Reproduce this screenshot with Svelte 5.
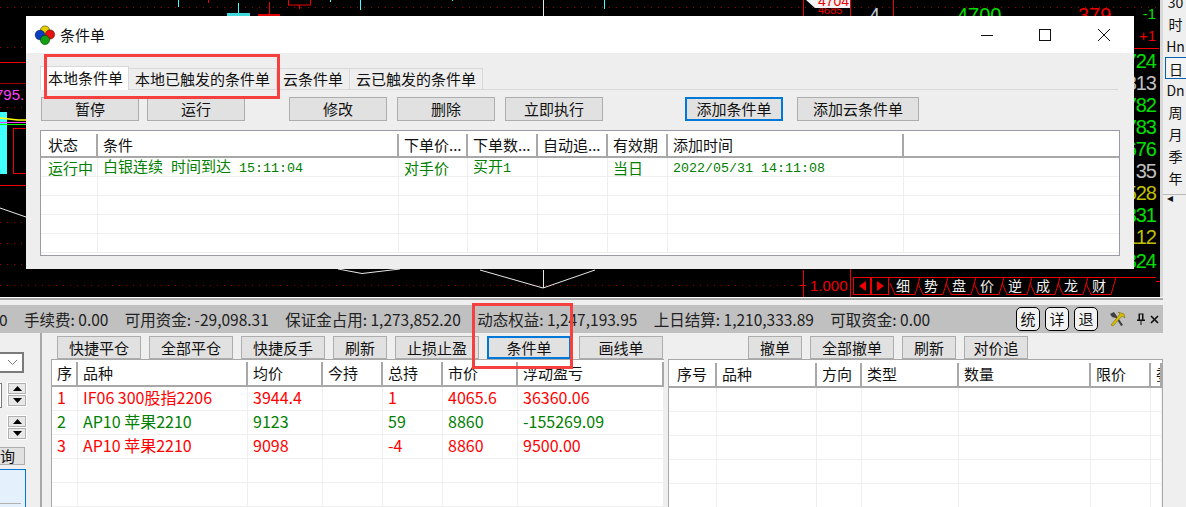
<script>
  const periods = ["30", "时", "Hn", "日", "Dn", "周", "月", "季", "年"];

  const sideNums = [
    { t: "724", y: 68, c: "#00e000" },
    { t: "313", y: 90, c: "#c0c0c0" },
    { t: "782", y: 112, c: "#00e000" },
    { t: "783", y: 134, c: "#00e000" },
    { t: "676", y: 156, c: "#00e000" },
    { t: "35", y: 178, c: "#c0c0c0" },
    { t: "528", y: 200, c: "#c0c000" },
    { t: "331", y: 222, c: "#00e000" },
    { t: "112", y: 244, c: "#c0c000" },
    { t: "324", y: 268, c: "#00e000" },
  ];
  const chartTabs = ["细", "势", "盘", "价", "逆", "成", "龙", "财"];

  const infoItems = [
    "手续费: 0.00",
    "可用资金: -29,098.31",
    "保证金占用: 1,273,852.20",
    "动态权益: 1,247,193.95",
    "上日结算: 1,210,333.89",
    "可取资金: 0.00",
  ];

  const dialogCols = [57, 301, 69, 70, 70, 60, 236, 215];
  const dialogHead = ["状态", "条件", "下单价...", "下单数...", "自动追...", "有效期", "添加时间", ""];

  const posCols = [26, 170, 75, 60, 60, 75, 146];
  const posHead = ["序", "品种", "均价", "今持", "总持", "市价", "浮动盈亏"];
  const posRows = [
    { c: "red", v: ["1", "IF06 300股指2206", "3944.4", "", "1", "4065.6", "36360.06"] },
    { c: "green", v: ["2", "AP10 苹果2210", "9123", "", "59", "8860", "-155269.09"] },
    { c: "red", v: ["3", "AP10 苹果2210", "9098", "", "-4", "8860", "9500.00"] },
    { c: "", v: ["", "", "", "", "", "", ""] },
    { c: "", v: ["", "", "", "", "", "", ""] },
  ];

  const orderCols = [48, 100, 45, 97, 132, 60, 11];
  const orderHead = ["序号", "品种", "方向", "类型", "数量", "限价", "委"];
</script>

{#snippet spinner()}
  <div class="spin">
    <span><svg width="9" height="5" viewBox="0 0 9 5"><path d="M4.5 0 L9 5 H0 Z" /></svg></span>
    <span><svg width="9" height="5" viewBox="0 0 9 5"><path d="M0 0 H9 L4.5 5 Z" /></svg></span>
  </div>
{/snippet}

<div class="page">
  <div class="top">
    <div class="chart">
      <svg width="1160" height="297" viewBox="0 0 1160 297">
        <!-- dotted price grid -->
        <g stroke="#a00000" stroke-dasharray="1 6" fill="none">
          <line x1="0" y1="7.5" x2="1160" y2="7.5" />
          <line x1="0" y1="47.5" x2="26" y2="47.5" />
          <line x1="0" y1="107.5" x2="26" y2="107.5" />
          <line x1="0" y1="222.5" x2="26" y2="222.5" />
          <line x1="0" y1="243.5" x2="26" y2="243.5" />
          <line x1="0" y1="264.5" x2="26" y2="264.5" />
          <line x1="0" y1="285.5" x2="800" y2="285.5" />
        </g>
        <!-- candles peeking out above the dialog -->
        <g fill="none" stroke="#40ffff">
          <line x1="178.5" y1="0" x2="178.5" y2="7" />
          <line x1="238.5" y1="3" x2="238.5" y2="14" />
          <line x1="330.5" y1="0" x2="330.5" y2="2" />
          <line x1="360.5" y1="0" x2="360.5" y2="10" />
          <line x1="452.5" y1="0" x2="452.5" y2="1" />
          <line x1="604.5" y1="0" x2="604.5" y2="9" />
        </g>
        <rect x="227" y="13" width="23" height="3" fill="#40d8d8" />
        <g fill="none" stroke="#f00000">
          <line x1="208.5" y1="0" x2="208.5" y2="3" />
          <line x1="269.5" y1="2" x2="269.5" y2="14" />
          <rect x="288.5" y="-2" width="22" height="7" />
          <line x1="299.5" y1="5" x2="299.5" y2="9" />
          <line x1="0" y1="62.5" x2="26" y2="62.5" />
          <line x1="0" y1="185.5" x2="26" y2="185.5" />
          <line x1="803.5" y1="0" x2="803.5" y2="16" />
          <line x1="850.5" y1="0" x2="850.5" y2="297" />
          <line x1="893.5" y1="0" x2="893.5" y2="16" />
          <line x1="1134" y1="48.5" x2="1159" y2="48.5" />
          <rect x="13.5" y="128.5" width="20" height="45" />
          <line x1="803.5" y1="270" x2="803.5" y2="297" />
          <line x1="800" y1="285.5" x2="806" y2="285.5" />
          <line x1="1156" y1="281.5" x2="1160" y2="281.5" />
        </g>
        <rect x="258" y="14" width="22" height="2" fill="#e00000" />
        <line x1="0" y1="83.5" x2="26" y2="83.5" stroke="#a00000" />
        <rect x="0" y="112" width="7" height="62" fill="#40ffff" />
        <polyline points="0,118 9,119 18,120 26,120" fill="none" stroke="#ffff00" stroke-width="1.5" />
        <line x1="0" y1="122.5" x2="26" y2="122.5" stroke="#ff40ff" />
        <line x1="0" y1="124.5" x2="26" y2="124.5" stroke="#00ff00" />
        <!-- white price line -->
        <g fill="none" stroke="#e8e8e8">
          <polyline points="0,208 26,217" />
          <polyline points="338,269 362,273.5 400,269" />
          <polyline points="480,270 543,288 595,270" />
          <line x1="543.5" y1="270" x2="543.5" y2="288" />
          <line x1="543.5" y1="0" x2="543.5" y2="16" />
        </g>

        <text class="mid-num" x="-5" y="100" fill="#ff40ff">795.</text>
        <text class="big" x="957" y="22" fill="#00e000">4700</text>
        <text class="big" x="1078" y="22" fill="#f00000">379</text>
        <text class="big" x="869" y="22" fill="#c0c8d8">4</text>
        <text class="mid-num right" x="1156" y="19" fill="#00e000">-1</text>
        <text class="mid-num right" x="1156" y="41" fill="#f00000">+1</text>
        {#each sideNums as n}
          <text class="big right tight" x="1156" y={n.y} fill={n.c}>{n.t}</text>
        {/each}

        <text class="small" x="818" y="14" fill="#f00000">4685</text>
        <polygon points="806,0 850,0 850,8 815,8" fill="#f4f4f4" />
        <text class="tag" x="818" y="6" fill="#f00000">4704</text>

        <text class="mid-num" x="810" y="291" fill="#f00000">1.000</text>

        <!-- chart tab strip -->
        <g fill="none" stroke="#f00000">
          <line x1="853" y1="277.5" x2="1156" y2="277.5" />
          <rect x="853.5" y="277.5" width="17" height="17" />
          <rect x="871.5" y="277.5" width="17" height="17" />
          {#each chartTabs as _, i}
            <polyline points="{890 + 28 * i},283 {895 + 28 * i},294.5 {915 + 28 * i},294.5 {920 + 28 * i},277.5" />
          {/each}
        </g>
        <polygon points="866,281 866,291 859,286" fill="#f00000" />
        <polygon points="877,281 877,291 884,286" fill="#f00000" />
        {#each chartTabs as t, i}
          <text class="tab" x={903 + 28 * i} y="291" fill="#f0f0f0">{t}</text>
        {/each}
      </svg>
    </div>

    <div class="side">
      {#each periods as p}
        <div class="period" class:current={p === "日"}>{p}</div>
      {/each}
      <div class="period arrow">◂</div>
    </div>
  </div>

  <div class="band"></div>

  <div class="info">
    <div class="info-text">
      <span>0</span>
      {#each infoItems as item}
        <span>{item}</span>
      {/each}
    </div>
    <div class="info-btns">
      <button class="round">统</button>
      <button class="round">详</button>
      <button class="round">退</button>
      <svg class="tools" width="18" height="16" viewBox="0 0 18 16">
        <path d="M2 3 L6 1 L15 14 L13 15 L8 7 L4 6 Z" fill="#404040" />
        <path d="M3 14 L12 3 L10 1 L16 3 L17 7 L14 5 L5 15 Z" fill="#d8c000" stroke="#6a5a00" stroke-width="0.5" />
      </svg>
      <svg class="pin" width="8" height="12" viewBox="0 0 8 12">
        <path d="M1.5 .5 H6.5 V6.5 H8 V8 H4.5 V12 H3.5 V8 H0 V6.5 H1.5 Z M3 1.5 V6.5 H5 V1.5 Z" fill="#111" fill-rule="evenodd" />
      </svg>
      <svg class="close" width="9" height="9" viewBox="0 0 9 9">
        <path d="M1 1 L8 8 M8 1 L1 8" stroke="#111" stroke-width="1.7" />
      </svg>
    </div>
  </div>

  <div class="bottom">
    <div class="strip">
      <div class="select">
        <svg width="11" height="7" viewBox="0 0 11 7"><path d="M1 1 L5.5 5.5 L10 1" fill="none" stroke="#777" /></svg>
      </div>
      <div class="spin-row">
        <div class="stub"></div>
        {@render spinner()}
      </div>
      <div class="spin-row second">
        {@render spinner()}
      </div>
      <div class="query">询</div>
      <div class="blue-box"><div class="blue-line"></div></div>
    </div>

    <div class="pane left">
      <div class="bar">
        <button>快捷平仓</button>
        <button>全部平仓</button>
        <button>快捷反手</button>
        <button class="short">刷新</button>
        <button>止损止盈</button>
        <button class="default">条件单</button>
        <button>画线单</button>
      </div>
      <div class="grid-wrap">
        <table>
          <colgroup>
            {#each posCols as w}<col style="width:{w}px" />{/each}
          </colgroup>
          <thead>
            <tr>{#each posHead as h}<th>{h}</th>{/each}</tr>
          </thead>
          <tbody>
            {#each posRows as r}
              <tr class={r.c}>{#each r.v as v}<td>{v}</td>{/each}</tr>
            {/each}
          </tbody>
        </table>
      </div>
    </div>

    <div class="pane right">
      <div class="bar">
        <button class="short">撤单</button>
        <button>全部撤单</button>
        <button class="short">刷新</button>
        <button class="mid">对价追</button>
      </div>
      <div class="grid-wrap orders">
        <table>
          <colgroup>
            {#each orderCols as w}<col style="width:{w}px" />{/each}
          </colgroup>
          <thead>
            <tr>{#each orderHead as h}<th>{h}</th>{/each}</tr>
          </thead>
          <tbody>
            {#each [0, 1, 2, 3, 4] as _}
              <tr>{#each orderCols as __}<td></td>{/each}</tr>
            {/each}
          </tbody>
        </table>
      </div>
    </div>
  </div>

  <!-- dialog floats over the chart -->
  <div class="dialog">
    <div class="title">
      <svg width="22" height="22" viewBox="0 0 22 22">
        <circle cx="11" cy="6.5" r="4.6" fill="#e8d000" stroke="#3a3000" stroke-width=".6" />
        <circle cx="6" cy="11" r="4.8" fill="#0a3cc0" stroke="#001a60" stroke-width=".6" />
        <circle cx="16" cy="10.5" r="4.6" fill="#e81010" stroke="#500000" stroke-width=".6" />
        <circle cx="11" cy="16" r="4.6" fill="#10a010" stroke="#004000" stroke-width=".6" />
      </svg>
      <span class="title-text">条件单</span>
      <div class="win">
        <svg width="14" height="14" viewBox="0 0 14 14"><line x1="1" y1="7.5" x2="13" y2="7.5" stroke="#111" /></svg>
        <svg width="14" height="14" viewBox="0 0 14 14"><rect x="1.5" y="1.5" width="11" height="11" fill="none" stroke="#111" /></svg>
        <svg width="14" height="14" viewBox="0 0 14 14"><path d="M1 1 L13 13 M13 1 L1 13" stroke="#111" fill="none" /></svg>
      </div>
    </div>
    <div class="dlg-body">
      <div class="tabs">
        <div class="tabitem active">本地条件单</div>
        <div class="tabitem">本地已触发的条件单</div>
        <div class="tabitem">云条件单</div>
        <div class="tabitem">云已触发的条件单</div>
      </div>
      <div class="dlg-bar">
        <button class="wide">暂停</button>
        <button class="wide">运行</button>
        <button class="wide gap-a">修改</button>
        <button class="wide">删除</button>
        <button class="wide">立即执行</button>
        <button class="wide default gap-b">添加条件单</button>
        <button class="wider">添加云条件单</button>
      </div>
      <div class="dlg-grid">
        <table>
          <colgroup>
            {#each dialogCols as w}<col style="width:{w}px" />{/each}
          </colgroup>
          <thead>
            <tr>
              {#each dialogHead as h, i}
                <th class:nosep={i === dialogHead.length - 1}>{h}</th>
              {/each}
            </tr>
          </thead>
          <tbody>
            <tr class="green">
              <td>运行中</td>
              <td>白银连续<span class="mono-cell">&nbsp;</span>时间到达<span class="mono-cell">&nbsp;15:11:04</span></td>
              <td>对手价</td>
              <td>买开<span class="mono-cell">1</span></td>
              <td></td>
              <td>当日</td>
              <td><span class="mono-cell">2022/05/31 14:11:08</span></td>
              <td class="nosep"></td>
            </tr>
            {#each [0, 1, 2, 3] as _}
              <tr>
                {#each dialogCols as __, i}
                  <td class:nosep={i === dialogCols.length - 1}></td>
                {/each}
              </tr>
            {/each}
          </tbody>
        </table>
      </div>
    </div>
  </div>

  <!-- red annotation boxes from the screenshot -->
  <div class="mark mark-tabs"></div>
  <div class="mark mark-btn"></div>
</div>

<style>
  :global(body) {
    margin: 0;
    overflow: hidden;
  }

  .page {
    position: relative;
    width: 1186px;
    height: 507px;
    overflow: hidden;
    background: #efefef;
    color: #111;
    font-family: "Noto Sans CJK SC", "Noto Sans", sans-serif;
    font-size: 15px;
  }

  .top {
    display: flex;
    height: 297px;
  }

  .chart {
    width: 1160px;
    height: 297px;
    background: #000;
    border-right: 3px solid #d8d8d8;
    flex-shrink: 0;
  }

  .chart svg {
    display: block;
  }

  .big {
    font-family: "Liberation Sans", sans-serif;
    font-size: 20px;
  }
  .tight {
    letter-spacing: -1px;
  }
  .mid-num {
    font-family: "Liberation Sans", sans-serif;
    font-size: 15px;
  }
  .right {
    text-anchor: end;
  }
  .small {
    font-family: "Liberation Sans", sans-serif;
    font-size: 11px;
  }
  .tag {
    font-family: "Liberation Sans", sans-serif;
    font-size: 14px;
  }
  .tab {
    font-size: 14px;
    text-anchor: middle;
  }

  .side {
    flex: 1;
    height: 203px;
    margin-top: -9px;
    border-bottom: 1px solid #b8b8b8;
    display: flex;
    flex-direction: column;
    align-items: flex-end;
    font-size: 14px;
    color: #111;
  }

  .period {
    width: 21px;
    height: 22px;
    line-height: 22px;
    text-align: center;
    flex-shrink: 0;
    box-sizing: border-box;
  }
  .period.current {
    border: 1px solid #0060b0;
    border-right: 0;
    background: #f4f4f4;
  }
  .arrow {
    height: 16px;
    line-height: 16px;
    font-size: 12px;
    text-align: left;
    padding-left: 2px;
  }

  .band {
    height: 8px;
    box-sizing: border-box;
    width: 1163px;
    border-top: 1px solid #fff;
    box-shadow: inset 0 2px 0 #a8a8a8;
    background: #efefef;
  }

  .info {
    width: 1163px;
    height: 28px;
    background: #c0c0c0;
    display: flex;
    align-items: center;
    justify-content: space-between;
    overflow: hidden;
  }

  .info-text {
    display: flex;
    gap: 16.4px;
    margin-left: -1px;
    white-space: nowrap;
    font-size: 15.5px;
    color: #222;
  }

  .info-btns {
    display: flex;
    align-items: center;
    flex-shrink: 0;
    padding-right: 4px;
  }

  .round {
    width: 24px;
    height: 24px;
    margin-right: 5px;
    padding: 0;
    border: 1px solid #000;
    border-radius: 5px;
    background: #f2f2f2;
    font: inherit;
    font-size: 15px;
    line-height: 20px;
    color: #111;
  }

  .tools {
    margin-left: 5px;
  }
  .pin {
    margin-left: 11px;
  }
  .close {
    margin-left: 5px;
  }

  .bottom {
    display: flex;
    height: 174px;
  }

  .strip {
    width: 40px;
    height: 174px;
    border-right: 2px solid #a8a8a8;
    flex-shrink: 0;
    display: flex;
    flex-direction: column;
    overflow: hidden;
  }
  .strip > div {
    flex-shrink: 0;
  }

  .select {
    width: 18px;
    height: 17px;
    margin-top: 19px;
    padding-right: 4px;
    border: 2px solid #7a7a7a;
    border-left: 0;
    background: #fff;
    display: flex;
    align-items: center;
    justify-content: flex-end;
  }

  .spin-row {
    display: flex;
    height: 25px;
    margin-top: 9px;
  }
  .spin-row.second {
    margin-top: 8px;
  }
  .stub {
    width: 1px;
    height: 23px;
    margin-top: 1px;
    border: 1px solid #7a7a7a;
    border-left: 0;
    background: #fff;
  }
  .spin {
    margin-left: 5px;
    width: 20px;
    height: 25px;
    display: flex;
    flex-direction: column;
    gap: 1px;
    background: #fff;
    padding: 1px;
    box-sizing: border-box;
  }
  .second .spin {
    margin-left: 7px;
  }
  .spin span {
    flex: 1;
    background: #e8e8e8;
    border: 1px solid #b0b0b0;
    display: flex;
    align-items: center;
    justify-content: center;
  }

  .query {
    width: 25px;
    height: 18px;
    margin-top: 7px;
    background: #e1e1e1;
    border: 1px solid #adadad;
    border-left: 0;
    box-sizing: border-box;
    font-size: 15px;
    line-height: 16px;
    text-align: right;
    padding-right: 11px;
  }

  .blue-box {
    width: 26px;
    height: 40px;
    margin-top: 4px;
    box-sizing: border-box;
    border: 1px solid #0078d7;
    border-left: 0;
    background: #e4f0fb;
    padding-top: 33px;
  }
  .blue-line {
    height: 1px;
    width: 21px;
    background: #b0b0b0;
  }

  .pane {
    display: flex;
    flex-direction: column;
    flex-shrink: 0;
  }
  .pane.left {
    width: 613px;
    margin-left: 9px;
  }
  .pane.right {
    width: 495px;
    margin-left: 4px;
  }

  .bar {
    display: flex;
    gap: 8px;
    height: 23px;
    margin-top: 3px;
    padding-left: 6px;
  }
  .pane.right .bar {
    padding-left: 80px;
  }

  button {
    box-sizing: border-box;
    width: 84px;
    height: 23px;
    padding: 0;
    background: #e1e1e1;
    border: 1px solid #adadad;
    font: inherit;
    font-size: 15px;
    line-height: 19px;
    color: #111;
    white-space: nowrap;
  }
  button.short {
    width: 54px;
  }
  button.mid {
    width: 64px;
  }
  button.default {
    border: 2px solid #0078d7;
  }

  .grid-wrap {
    flex: 1;
    border-left: 1px solid #a8a8a8;
    border-top: 1px solid #a8a8a8;
    background: #fff;
    padding-top: 2px;
    overflow: hidden;
  }
  .grid-wrap.orders {
    border-right: 1px solid #a8a8a8;
    padding-top: 3px;
  }

  table {
    table-layout: fixed;
    border-collapse: separate;
    border-spacing: 0;
    width: 100%;
  }

  th {
    height: 24px;
    padding: 0 0 2px 5px;
    box-sizing: border-box;
    text-align: left;
    font-weight: 400;
    white-space: nowrap;
    overflow: hidden;
    color: #111;
    border-right: 2px solid #a8a8a8;
    border-bottom: 2px solid #a8a8a8;
    line-height: 21px;
  }

  td {
    height: 24px;
    padding: 0 0 2px 5px;
    box-sizing: border-box;
    white-space: nowrap;
    overflow: hidden;
    border-right: 1px solid #efefef;
    border-bottom: 1px solid #efefef;
    line-height: 21px;
    font-size: 16px;
  }

  .orders th:first-child {
    padding-left: 8px;
  }

  .red td {
    color: #ff0000;
  }
  .green td {
    color: #008000;
  }

  .dialog {
    position: absolute;
    left: 26px;
    top: 16px;
    width: 1108px;
    height: 253px;
    background: #eee;
    display: flex;
    flex-direction: column;
  }

  .title {
    height: 37px;
    flex-shrink: 0;
    background: #fff;
    display: flex;
    align-items: center;
    padding-left: 8px;
  }
  .title-text {
    margin-left: 4px;
    color: #111;
  }
  .win {
    margin-left: auto;
    display: flex;
    gap: 44px;
    padding-right: 23px;
  }
  .win svg {
    display: block;
  }
  .win svg:last-child {
    margin-left: 1px;
  }

  .dlg-body {
    flex: 1;
    padding: 13px 14px 0 14px;
    display: flex;
    flex-direction: column;
  }

  .tabs {
    display: flex;
    align-items: flex-end;
    height: 24px;
    margin-left: 1px;
    margin-right: 2px;
    border-bottom: 1px solid #d8d8d8;
    box-sizing: border-box;
  }
  .tabitem {
    height: 21px;
    line-height: 20px;
    padding: 0 6px;
    margin-left: -1px;
    border: 1px solid #d8d8d8;
    border-bottom: 0;
    box-sizing: border-box;
    background: #eee;
    white-space: nowrap;
    font-size: 15px;
    color: #111;
  }
  .tabitem.active {
    height: 24px;
    margin-bottom: -1px;
    padding: 0 5px 0 7px;
    background: #fff;
    line-height: 21px;
    border-bottom: 0;
    position: relative;
  }

  .dlg-bar {
    display: flex;
    gap: 8px;
    margin-top: 7px;
    margin-left: 1px;
  }
  .dlg-bar button {
    height: 24px;
    line-height: 20px;
  }
  .dlg-bar .wide {
    width: 98px;
  }
  .dlg-bar .wider {
    width: 122px;
    margin-left: 6px;
  }
  .dlg-bar .gap-a {
    margin-left: 36px;
  }
  .dlg-bar .gap-a + .wide {
    margin-left: 2px;
  }
  .dlg-bar .gap-a + .wide + .wide {
    margin-left: 2px;
  }
  .dlg-bar .gap-b {
    margin-left: 74px;
  }

  .dlg-grid {
    width: 1080px;
    height: 126px;
    margin-top: 9px;
    box-sizing: border-box;
    border: 1px solid #9a9aa5;
    background: #fff;
    padding-top: 3px;
    overflow: hidden;
  }

  .dlg-grid th {
    height: 24px;
    padding-bottom: 0;
    line-height: 22px;
  }
  .dlg-grid td {
    height: 19px;
    padding-bottom: 0;
    line-height: 15px;
    font-size: 15px;
  }
  .dlg-grid th:first-child,
  .dlg-grid td:first-child {
    padding-left: 7px;
  }
  .dlg-grid .nosep {
    border-right: 0;
  }

  .mono-cell {
    font-family: "Liberation Mono", monospace;
    font-size: 13.33px;
    line-height: 1;
    white-space: pre;
  }

  .mark {
    position: absolute;
    box-sizing: border-box;
    border: 3px solid #f64040;
    pointer-events: none;
  }
  .mark-tabs {
    left: 44px;
    top: 54px;
    width: 236px;
    height: 45px;
  }
  .mark-btn {
    left: 472px;
    top: 303px;
    width: 101px;
    height: 66px;
  }
</style>
